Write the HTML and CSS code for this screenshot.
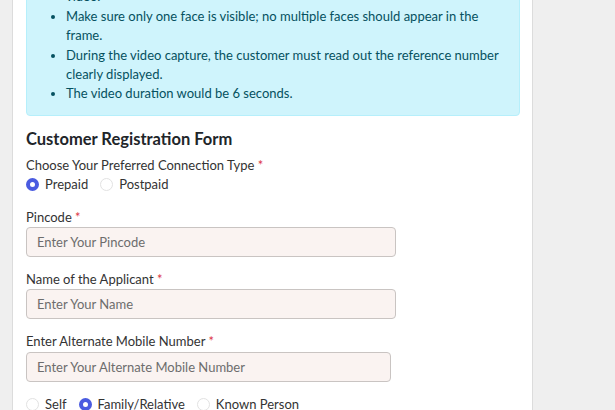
FILE: index.html
```html
<!DOCTYPE html>
<html lang="en">

<head>
    <meta charset="UTF-8">
    <meta name="viewport" content="width=device-width, initial-scale=1.0">
    <title>Customer Registration</title>
    <link rel="stylesheet" href="styles.css">
</head>

<body>
    <div class="page">
        <div class="alert">
            <ul>
                <li>Ensure proper lighting and keep your face steady during the<br>video.</li>
                <li>Make sure only one face is visible; no multiple faces should appear in the frame.</li>
                <li>During the video capture, the customer must read out the reference number clearly displayed.</li>
                <li>The video duration would be 6 seconds.</li>
            </ul>
        </div>

        <h5 class="title">Customer Registration Form</h5>

        <div class="group">
            <label class="label">Choose Your Preferred Connection Type <span class="req">*</span></label>
            <div class="radios">
                <label class="check"><input type="radio" name="conn" checked> Prepaid</label>
                <label class="check"><input type="radio" name="conn"> Postpaid</label>
            </div>
        </div>

        <div class="group">
            <label class="label">Pincode <span class="req">*</span></label>
            <input class="field" type="text" placeholder="Enter Your Pincode">
        </div>

        <div class="group">
            <label class="label">Name of the Applicant <span class="req">*</span></label>
            <input class="field" type="text" placeholder="Enter Your Name">
        </div>

        <div class="group">
            <label class="label">Enter Alternate Mobile Number <span class="req">*</span></label>
            <input class="field short" type="text" placeholder="Enter Your Alternate Mobile Number">
        </div>

        <div class="radios">
            <label class="check"><input type="radio" name="who"> Self</label>
            <label class="check"><input type="radio" name="who" checked> Family/Relative</label>
            <label class="check"><input type="radio" name="who"> Known Person</label>
        </div>
    </div>
</body>

</html>
```

FILE: styles.css
```css
body {
    margin: 0;
    background-color: #efefef;
    font-family: Lato, sans-serif;
    font-size: 13px;
    line-height: 19.4px;
    color: #333;
    overflow: hidden;
}

.page {
    width: 494px;
    margin-left: 12px;
    margin-top: -45px;
    padding: 0 12px 40px 13px;
    background-color: #fff;
    border-left: 1px solid #dcdcdc;
    border-right: 1px solid #dcdcdc;
}

.alert {
    padding: 12px 12px 11px 0;
    background-color: #cff4fc;
    border: 1px solid #b6effb;
    border-radius: 4px;
    color: #055160;
}

.alert ul {
    margin: 0;
    padding-left: 39px;
}

.title {
    margin: 13px 0 7px 0;
    font-size: 16.5px;
    font-weight: 700;
    line-height: 20px;
    color: #212529;
}

.group {
    margin-bottom: 13px;
}

.label {
    display: block;
}

.req {
    color: #dc3545;
}

.radios {
    display: flex;
    gap: 12px;
}

.check {
    display: flex;
    align-items: center;
    gap: 6px;
}

.check input {
    appearance: none;
    margin: 0;
    width: 13px;
    height: 13px;
    border: 1px solid #e2e2e2;
    border-radius: 50%;
    background-color: #fff;
}

.check input:checked {
    border: 4px solid #4a5be0;
}

.field {
    display: block;
    box-sizing: border-box;
    width: 370px;
    height: 30px;
    padding: 0 10px;
    background-color: #faf3f1;
    border: 1px solid #c9c4c2;
    border-radius: 4px;
    font-family: inherit;
    font-size: 13px;
    color: #333;
}

.field::placeholder {
    color: #6d6d6d;
}

.field.short {
    width: 365px;
}
```
